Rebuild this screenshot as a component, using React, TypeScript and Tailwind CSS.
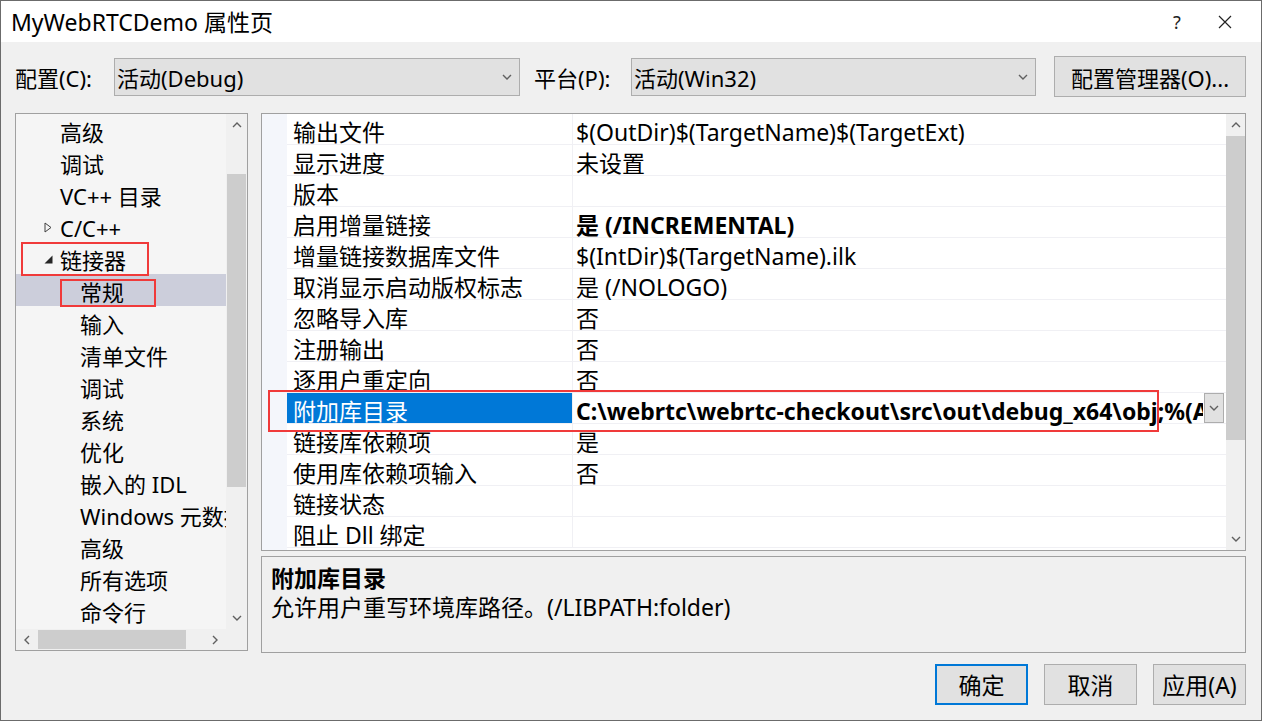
import React from "react";

const Chevron = ({ dir = "down", className = "" }: { dir?: "down" | "up" | "left" | "right"; className?: string }) => {
  const pts: Record<string, string> = {
    down: "1,1 5,5 9,1",
    up: "1,5 5,1 9,5",
    left: "5,1 1,5 5,9",
    right: "1,1 5,5 1,9",
  };
  const horiz = dir === "left" || dir === "right";
  return (
    <svg width={horiz ? 6 : 10} height={horiz ? 10 : 6} viewBox={horiz ? "0 0 6 10" : "0 0 10 6"} className={className}>
      <polyline points={pts[dir]} fill="none" stroke="#606060" strokeWidth="1.4" />
    </svg>
  );
};

const tree: { t: string; l: number; exp?: "open" | "closed"; sel?: boolean }[] = [
  { t: "高级", l: 1 },
  { t: "调试", l: 1 },
  { t: "VC++ 目录", l: 1 },
  { t: "C/C++", l: 1, exp: "closed" },
  { t: "链接器", l: 1, exp: "open" },
  { t: "常规", l: 2, sel: true },
  { t: "输入", l: 2 },
  { t: "清单文件", l: 2 },
  { t: "调试", l: 2 },
  { t: "系统", l: 2 },
  { t: "优化", l: 2 },
  { t: "嵌入的 IDL", l: 2 },
  { t: "Windows 元数据", l: 2 },
  { t: "高级", l: 2 },
  { t: "所有选项", l: 2 },
  { t: "命令行", l: 2 },
];

const rows: { n: string; v: string; b?: boolean; sel?: boolean }[] = [
  { n: "输出文件", v: "$(OutDir)$(TargetName)$(TargetExt)" },
  { n: "显示进度", v: "未设置" },
  { n: "版本", v: "" },
  { n: "启用增量链接", v: "是 (/INCREMENTAL)", b: true },
  { n: "增量链接数据库文件", v: "$(IntDir)$(TargetName).ilk" },
  { n: "取消显示启动版权标志", v: "是 (/NOLOGO)" },
  { n: "忽略导入库", v: "否" },
  { n: "注册输出", v: "否" },
  { n: "逐用户重定向", v: "否" },
  { n: "附加库目录", v: "C:\\webrtc\\webrtc-checkout\\src\\out\\debug_x64\\obj;%(AdditionalLibraryDirectories)", b: true, sel: true },
  { n: "链接库依赖项", v: "是" },
  { n: "使用库依赖项输入", v: "否" },
  { n: "链接状态", v: "" },
  { n: "阻止 Dll 绑定", v: "" },
];

export default function App() {
  return (
    <div className="relative w-[1262px] h-[721px] overflow-hidden bg-[#f0f0f0] border border-[#6b6b6b] text-[22px] text-[#000] font-['Noto_Sans','Noto_Sans_CJK_SC',sans-serif] leading-none flex flex-col">
      {/* Title bar */}
      <div className="h-[41px] bg-white flex items-center shrink-0">
        <div className="pl-[10px] flex-1 text-[23px] pt-[2px]">MyWebRTCDemo 属性页</div>
        <div className="w-[40px] text-center text-[18px] text-[#222]">?</div>
        <div className="w-[64px] flex justify-center pr-[8px]">
          <svg width="14" height="14" viewBox="0 0 14 14">
            <path d="M1 1 L13 13 M13 1 L1 13" stroke="#222" strokeWidth="1.2" />
          </svg>
        </div>
      </div>

      {/* Config row */}
      <div className="mt-[14px] h-[41px] flex items-center pl-[14px] pr-[15px] shrink-0">
        <div className="w-[99px] pt-[3px]">配置(C):</div>
        <div className="w-[406px] h-[38px] bg-[#e1e1e1] border border-[#adadad] flex items-center pl-[2px] pr-[7px]">
          <span className="flex-1 pt-[2px]">活动(Debug)</span>
          <Chevron />
        </div>
        <div className="w-[111px] pl-[14px] pt-[3px]">平台(P):</div>
        <div className="w-[405px] h-[38px] bg-[#e1e1e1] border border-[#adadad] flex items-center pl-[2px] pr-[7px]">
          <span className="flex-1 pt-[2px]">活动(Win32)</span>
          <Chevron />
        </div>
        <div className="flex-1" />
        <div className="w-[192px] h-[41px] bg-[#e1e1e1] border border-[#adadad] flex items-center justify-center pt-[2px]">
          配置管理器(O)...
        </div>
      </div>

      {/* Main */}
      <div className="mt-[16px] h-[540px] flex pl-[14px] pr-[15px] gap-[13px] shrink-0">
        {/* Tree */}
        <div className="w-[233px] h-[538px] shrink-0 border border-[#a0a0a0] bg-[#f5f5f5] flex flex-col">
          <div className="flex-1 flex min-h-0">
            <div className="w-[210px] overflow-hidden">
              {tree.map((it, i) => (
                <div
                  key={i}
                  className={`h-[32px] flex items-center whitespace-nowrap pt-[3px] ${it.sel ? "bg-[#cccedb]" : ""}`}
                >
                  <div className={it.l === 1 ? "w-[28px] shrink-0" : "w-[64px] shrink-0"} />
                  {it.l === 1 && (
                    <div className="w-[16px] shrink-0 flex items-center">
                      {it.exp === "closed" && (
                        <svg width="8" height="11" viewBox="0 0 8 11">
                          <path d="M1 1 L7 5.5 L1 10 Z" fill="none" stroke="#404040" strokeWidth="1" />
                        </svg>
                      )}
                      {it.exp === "open" && (
                        <svg width="9" height="9" viewBox="0 0 9 9">
                          <path d="M8.5 0.5 L8.5 8.5 L0.5 8.5 Z" fill="#262626" />
                        </svg>
                      )}
                    </div>
                  )}
                  <span>{it.t}</span>
                </div>
              ))}
            </div>
            <div className="w-[21px] bg-[#f0f0f0] flex flex-col">
              <div className="h-[22px] flex items-center justify-center">
                <Chevron dir="up" />
              </div>
              <div className="h-[38px]" />
              <div className="h-[313px] bg-[#cdcdcd] mx-[1px]" />
              <div className="flex-1" />
              <div className="h-[22px] flex items-center justify-center">
                <Chevron dir="down" />
              </div>
            </div>
          </div>
          <div className="h-[21px] flex shrink-0">
            <div className="w-[210px] bg-[#f0f0f0] flex items-center">
              <div className="w-[22px] flex justify-center">
                <Chevron dir="left" />
              </div>
              <div className="w-[148px] h-[19px] bg-[#cdcdcd]" />
              <div className="flex-1" />
              <div className="w-[22px] flex justify-center">
                <Chevron dir="right" />
              </div>
            </div>
            <div className="flex-1 bg-[#f0f0f0]" />
          </div>
        </div>

        {/* Right column */}
        <div className="flex-1 min-w-0 flex flex-col gap-[5px]">
          {/* Property grid */}
          <div className="h-[438px] border border-[#a0a0a0] bg-white flex text-[23px]">
            <div className="w-[25px] bg-[#f4f6fb] shrink-0" />
            <div className="flex-1 min-w-0">
              {rows.map((r, i) => (
                <div key={i} className="h-[31px] flex border-b border-[#f0f0f4] whitespace-nowrap">
                  <div
                    className={`w-[286px] shrink-0 pl-[6px] pt-[7px] flex items-center border-r border-[#f0f0f4] ${
                      r.sel ? "bg-[#0078d7] text-white" : ""
                    }`}
                  >
                    {r.n}
                  </div>
                  <div className="flex-1 min-w-0 flex items-center pl-[3px] pt-[7px] relative">
                    <span className={`${r.b ? "font-bold" : ""} ${r.sel ? "w-[627px] overflow-hidden leading-[1.4]" : ""}`}>{r.v}</span>
                    {r.sel && (
                      <div className="absolute right-[2px] top-[0px] w-[20px] h-[30px] bg-[#e1e1e1] border border-[#adadad] flex items-center justify-center">
                        <Chevron />
                      </div>
                    )}
                  </div>
                </div>
              ))}
            </div>
            <div className="w-[19px] bg-[#f0f0f0] flex flex-col shrink-0">
              <div className="h-[22px] flex items-center justify-center">
                <Chevron dir="up" />
              </div>
              <div className="h-[304px] bg-[#cdcdcd]" />
              <div className="flex-1" />
              <div className="h-[22px] flex items-center justify-center">
                <Chevron dir="down" />
              </div>
            </div>
          </div>
          {/* Description */}
          <div className="h-[97px] border border-[#a0a0a0] bg-[#f0f0f0] pl-[9px] pt-[9px] text-[23px]">
            <div className="font-bold h-[24px] flex items-center">附加库目录</div>
            <div className="h-[30px] flex items-center mt-[2px]">允许用户重写环境库路径。(/LIBPATH:folder)</div>
          </div>
        </div>
      </div>

      {/* Buttons */}
      <div className="mt-[11px] flex justify-end gap-[16px] pr-[15px] text-[23px]">
        <div className="w-[93px] h-[41px] bg-[#e1e1e1] border-2 border-[#0078d7] flex items-center justify-center pt-[2px]">确定</div>
        <div className="w-[93px] h-[41px] bg-[#e1e1e1] border border-[#adadad] flex items-center justify-center pt-[2px]">取消</div>
        <div className="w-[93px] h-[41px] bg-[#e1e1e1] border border-[#adadad] flex items-center justify-center pt-[2px]">应用(A)</div>
      </div>

      {/* Red annotation boxes */}
      <div className="absolute left-[20px] top-[241px] w-[128px] h-[34px] border-2 border-[#f03a3a]" />
      <div className="absolute left-[59px] top-[278px] w-[96px] h-[28px] border-2 border-[#f03a3a]" />
      <div className="absolute left-[267px] top-[389px] w-[891px] h-[42px] border-2 border-[#f03a3a]" />
    </div>
  );
}
